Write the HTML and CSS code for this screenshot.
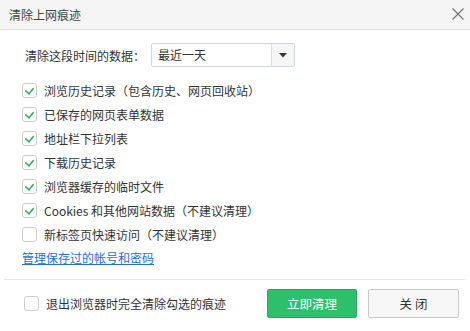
FILE: index.html
```html
<!DOCTYPE html>
<html lang="zh-CN">
<head>
    <meta charset="UTF-8">
    <title>清除上网痕迹</title>
    <link rel="stylesheet" href="styles.css">
</head>
<body>
    <div class="dialog">
        <div class="titlebar">
            <span class="title">清除上网痕迹</span>
            <svg class="close" width="12" height="12" viewBox="0 0 12 12">
                <path d="M0.5 0.5 L11.5 11.5 M11.5 0.5 L0.5 11.5" stroke="#707070" stroke-width="1.1" fill="none"/>
            </svg>
        </div>

        <div class="content">
            <div class="range">
                <span class="range-label">清除这段时间的数据：</span>
                <div class="select">
                    <span class="select-value">最近一天</span>
                    <span class="select-arrow">
                        <svg width="8" height="5" viewBox="0 0 8 5"><path d="M0 0 H8 L4 4.5 Z" fill="#333"/></svg>
                    </span>
                </div>
            </div>

            <ul class="items">
                <li><span class="box checked"></span>浏览历史记录（包含历史、网页回收站）</li>
                <li><span class="box checked"></span>已保存的网页表单数据</li>
                <li><span class="box checked"></span>地址栏下拉列表</li>
                <li><span class="box checked"></span>下载历史记录</li>
                <li><span class="box checked"></span>浏览器缓存的临时文件</li>
                <li><span class="box checked"></span>Cookies 和其他网站数据（不建议清理）</li>
                <li><span class="box"></span>新标签页快速访问（不建议清理）</li>
            </ul>

            <a class="manage" href="#">管理保存过的帐号和密码</a>
        </div>

        <div class="footer">
            <label class="exit-option"><span class="box"></span>退出浏览器时完全清除勾选的痕迹</label>
            <button class="btn btn-primary">立即清理</button>
            <button class="btn">关 闭</button>
        </div>
    </div>
</body>
</html>
```

FILE: styles.css
```css
body {
    margin: 0;
    font-family: "Noto Sans CJK SC", "Liberation Sans", sans-serif;
    font-size: 12px;
    color: #333;
    background-color: #fff;
}
.dialog {
    width: 470px;
    height: 331px;
    background-color: #fff;
}
.titlebar {
    height: 29px;
    display: flex;
    align-items: center;
    justify-content: space-between;
    padding: 0 6px 0 9px;
    background-color: #f5f5f5;
    border-bottom: 1px solid #e1e1e1;
}
.title {
    font-size: 12px;
    color: #444;
}
.close {
    display: block;
    margin-top: -2px;
}
.content {
    padding: 13px 0 0 22px;
    height: 236px;
}
.range {
    display: flex;
    align-items: center;
    height: 24px;
    margin-left: 3px;
}
.range-label {
    width: 126px;
}
.select {
    display: flex;
    width: 142px;
    height: 22px;
    border: 1px solid #cfd6df;
    border-radius: 2px;
}
.select-value {
    flex: 1;
    line-height: 22px;
    padding-left: 6px;
}
.select-arrow {
    width: 22px;
    display: flex;
    align-items: center;
    justify-content: center;
    background-color: #f6f6f6;
    border-left: 1px solid #dadde2;
}
.items {
    list-style: none;
    margin: 11px 0 0 0;
    padding: 0;
}
.items li {
    display: flex;
    align-items: center;
    height: 24px;
}
.box {
    width: 13px;
    height: 13px;
    border: 1px solid #cdcdcd;
    border-radius: 3px;
    background-color: #fff;
    margin-right: 7px;
    flex-shrink: 0;
    position: relative;
}
.box.checked::after {
    content: "";
    position: absolute;
    left: 3px;
    top: 1px;
    width: 5px;
    height: 8px;
    border-right: 2px solid #28b44f;
    border-bottom: 2px solid #28b44f;
    transform: rotate(40deg) scale(0.8);
    transform-origin: center;
}
.manage {
    display: inline-block;
    margin-top: 2px;
    line-height: 20px;
    color: #2a6fd0;
    text-decoration: underline;
}
.footer {
    display: flex;
    align-items: center;
    margin: 0 4px;
    padding: 9px 7px 10px 20px;
    border-top: 1px solid #e6e6e6;
}
.exit-option {
    display: flex;
    align-items: center;
    flex: 1;
}
.btn {
    width: 91px;
    height: 29px;
    margin-left: 11px;
    border: 1px solid #c9c9c9;
    border-radius: 2px;
    background-color: #f7f7f7;
    color: #333;
    font-family: "Noto Sans CJK SC", "Liberation Sans", sans-serif;
    font-size: 12.5px;
    cursor: pointer;
}
.btn-primary {
    width: 90px;
    background-color: #2ebf6b;
    border-color: #27a95d;
    color: #fff;
}
```
